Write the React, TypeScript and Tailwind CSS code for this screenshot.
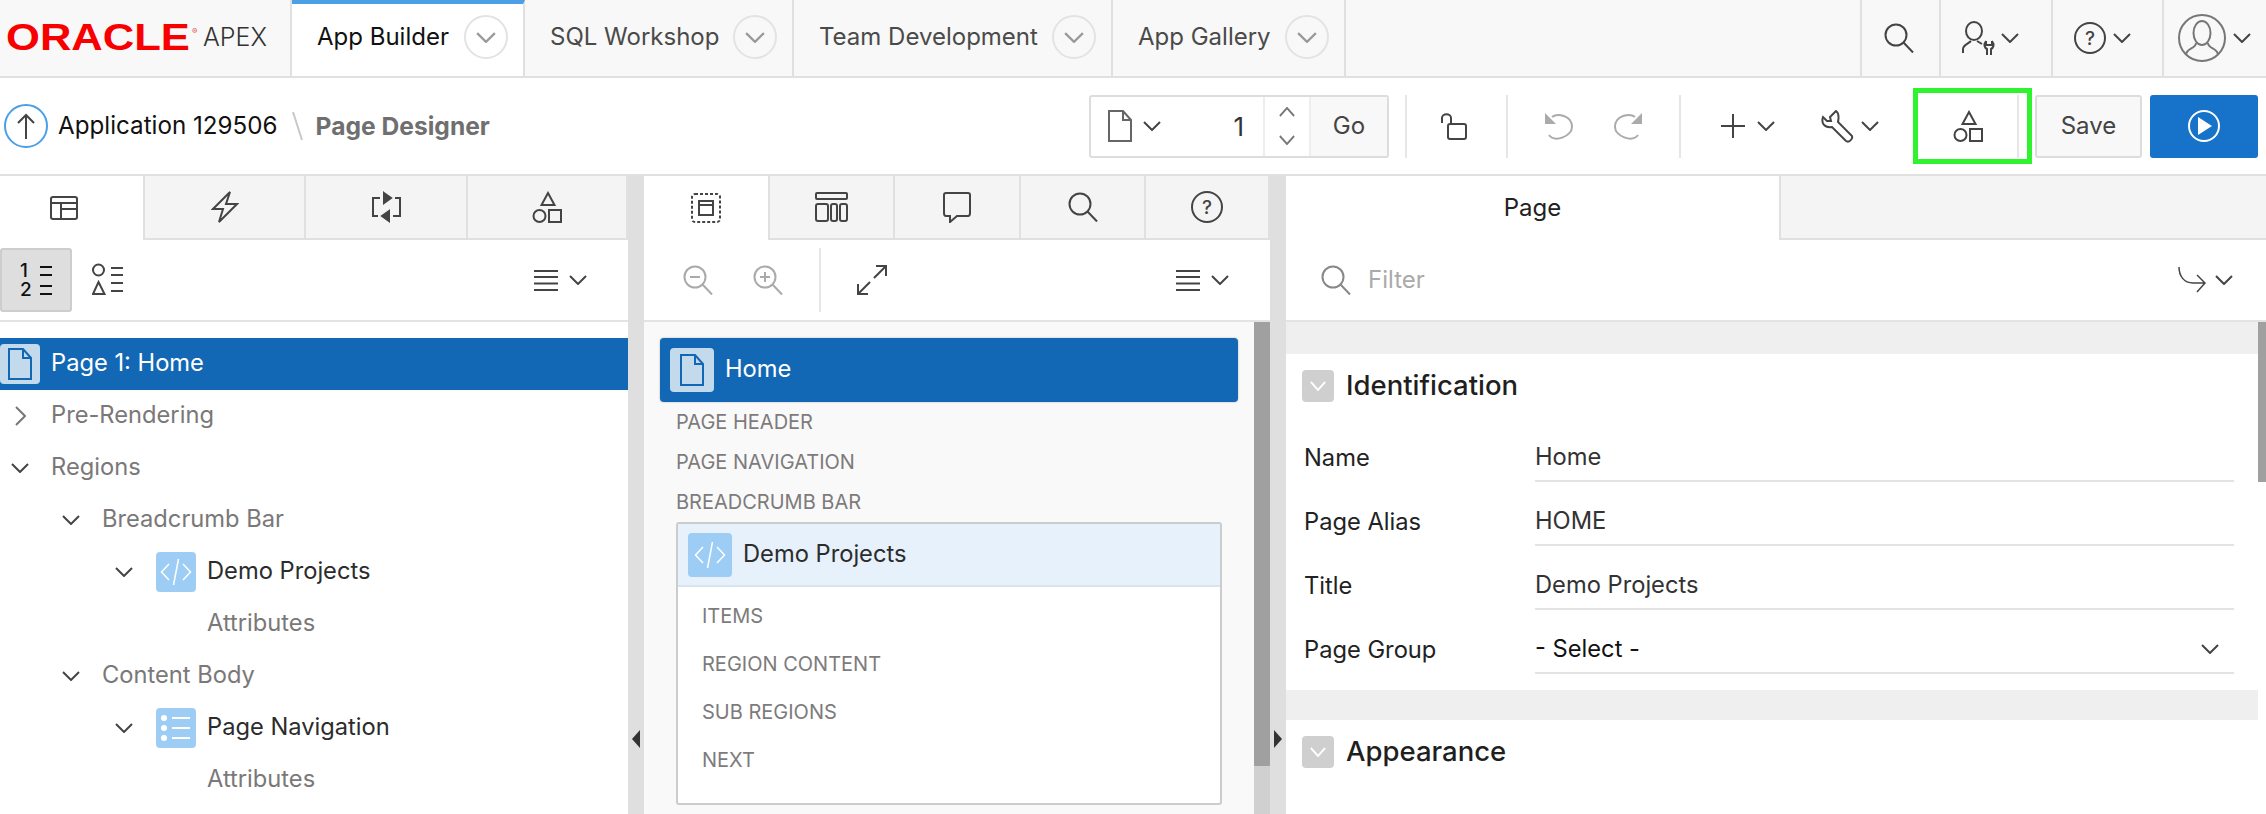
const Chev = ({ w = 18, h = 10, c = "#444", sw = 2 }: { w?: number; h?: number; c?: string; sw?: number }) => (
  <svg width={w} height={h} viewBox="0 0 18 10" preserveAspectRatio="none" fill="none" className="shrink-0">
    <polyline points="1,1 9,9 17,1" stroke={c} strokeWidth={sw} />
  </svg>
);

const Ico = ({ w, h, vb, c = "#444", sw = 2, children }: { w: number; h: number; vb?: string; c?: string; sw?: number; children: React.ReactNode }) => (
  <svg width={w} height={h} viewBox={vb ?? `0 0 ${w} ${h}`} fill="none" stroke={c} strokeWidth={sw} className="shrink-0">
    {children}
  </svg>
);

const PageIcon = ({ w = 24, h = 32, c = "#666", fill = "none" }: { w?: number; h?: number; c?: string; fill?: string }) => (
  <Ico w={w} h={h} vb="0 0 24 32" c={c}>
    <path d="M1 1H15L23 10V31H1Z" fill={fill} />
    <path d="M15 1V10H23" />
  </Ico>
);

const Shapes = ({ c = "#444" }: { c?: string }) => (
  <Ico w={30} h={32} c={c}>
    <path d="M16 2L22.500 14H9.500Z" />
    <circle cx="7.500" cy="25" r="6" />
    <rect x="17" y="19" width="12" height="12" />
  </Ico>
);

const Search = ({ s = 30, c = "#444" }: { s?: number; c?: string }) => (
  <Ico w={s} h={s} vb="0 0 30 30" c={c}>
    <circle cx="12" cy="12" r="10.5" />
    <path d="M19.5 19.5L29 29.5" />
  </Ico>
);

const Zoom = ({ plus }: { plus?: boolean }) => (
  <Ico w={30} h={30} c="#aaa">
    <circle cx="12" cy="12" r="10.5" />
    <path d="M19.5 19.5L29 29.5" />
    <path d="M7 12H17" />
    {plus && <path d="M12 7V17" />}
  </Ico>
);

const Help = ({ s = 32 }: { s?: number }) => (
  <span className="flex shrink-0 items-center justify-center rounded-full border-2 border-[#444] text-[#444]" style={{ width: s, height: s }}>
    <span className="text-[19px] font-medium leading-none">?</span>
  </span>
);

const Burger = () => (
  <div className="flex items-center gap-[11px]">
    <Ico w={24} h={22}>
      <path d="M0 2H24M0 8H24M0 14.500H24M0 21H24" />
    </Ico>
    <Chev />
  </div>
);

const CodeIcon = ({ s = 40 }: { s?: number }) => (
  <div className="flex shrink-0 items-center justify-center rounded-[4px] bg-[#9dcdf5]" style={{ width: s, height: s }}>
    <Ico w={32} h={30} c="#fff" sw={1.500}>
      <path d="M9 7L1.500 15L9 23M23 7L30.500 15L23 23M18.500 2L13.500 28" />
    </Ico>
  </div>
);

const ListIcon = () => (
  <div className="flex h-[40px] w-[40px] shrink-0 items-center justify-center rounded-[4px] bg-[#9dcdf5]">
    <svg width="30" height="30" viewBox="0 0 30 30" fill="#fff">
      <circle cx="3" cy="5" r="3" />
      <circle cx="3" cy="15" r="3" />
      <circle cx="3" cy="25" r="3" />
      <rect x="11" y="4" width="18" height="2" />
      <rect x="11" y="14" width="18" height="2" />
      <rect x="11" y="24" width="18" height="2" />
    </svg>
  </div>
);

const Menu = ({ label, w, textW, active }: { label: string; w: number; textW: number; active?: boolean }) => (
  <div className={`flex h-full shrink-0 items-center border-r-2 border-[#e0e0e0] pl-[25px] ${active ? "border-t-[4px] border-t-[#4a9fe5] bg-white pb-[6px]" : "bg-[#f8f8f8] pb-[2px]"}`} style={{ width: w }}>
    <span className={`whitespace-nowrap text-[24px] ${active ? "text-[#111]" : "text-[#4a4a4a]"}`} style={{ width: textW }}>
      {label}
    </span>
    <span className="flex h-[44px] w-[44px] items-center justify-center rounded-full border-2 border-[#e3e3e3] pt-[1px]">
      <Chev w={20} h={11} c="#999" />
    </span>
  </div>
);

const Tab = ({ w, active, cls = "", children }: { w?: number; active?: boolean; cls?: string; children?: React.ReactNode }) => (
  <div className={`flex h-full items-center justify-center border-r-2 border-[#e0e0e0] ${active ? "bg-white" : "border-b-2 bg-[#f4f4f4]"} ${w ? "shrink-0" : "flex-1"} ${cls}`} style={w ? { width: w } : undefined}>
    {children}
  </div>
);

const Row = ({ pad, chev, side, icon, dark, children }: { pad: number; chev?: "down" | "right"; side?: boolean; icon?: React.ReactNode; dark?: boolean; children: React.ReactNode }) => (
  <div className="flex h-[52px] items-center" style={{ paddingLeft: pad }}>
    <div className="flex w-[20px] shrink-0 justify-center">
      {chev === "down" && <Chev />}
      {chev === "right" && (
        <svg width="11" height="20" viewBox="0 0 11 20" fill="none">
          <polyline points="1,1 10,10 1,19" stroke="#777" strokeWidth="2" />
        </svg>
      )}
    </div>
    {icon && <div className="ml-[22px]">{icon}</div>}
    <span className={`pb-[2px] text-[23.7px] ${dark ? "text-[#2c2c2c]" : "text-[#7a7878]"} ${icon ? "ml-[11px]" : side ? "ml-[73px]" : "ml-[21px]"}`}>{children}</span>
  </div>
);

const Splitter = ({ dir }: { dir: "l" | "r" }) => (
  <div className="flex w-[16px] shrink-0 justify-center bg-[#dfdfdf] pt-[554px]">
    <svg width="8" height="18" viewBox="0 0 8 18" fill="#333">
      {dir === "l" ? <path d="M8 0V18L0 9Z" /> : <path d="M0 0V18L8 9Z" />}
    </svg>
  </div>
);

const Field = ({ label, value, dark, select }: { label: string; value: string; dark?: boolean; select?: boolean }) => (
  <div className="flex h-[64px] pl-[18px] pr-[24px]">
    <span className="flex h-[64px] w-[231px] shrink-0 items-center pt-[16px] text-[23.7px] text-[#222]">{label}</span>
    <div className="flex h-[64px] flex-1 items-center justify-between border-b-2 border-[#e3e3e3] pt-[16px]">
      <span className={`text-[23.7px] ${dark ? "text-[#111]" : "text-[#333]"}`}>{value}</span>
      {select && (
        <span className="mr-[15px]">
          <Chev />
        </span>
      )}
    </div>
  </div>
);

const Section = ({ label }: { label: string }) => (
  <div className="flex h-[64px] items-center gap-[12px] pl-[16px]">
    <span className="flex h-[32px] w-[32px] items-center justify-center rounded-[4px] bg-[#cfcfcf]">
      <Chev w={16} h={10} c="#fff" />
    </span>
    <span className="text-[27.5px] font-medium text-[#1f1f1f]">{label}</span>
  </div>
);

const Caps = ({ children, cls = "" }: { children: React.ReactNode; cls?: string }) => (
  <div className={`text-[20px] uppercase text-[#7d7b7b] ${cls}`}>{children}</div>
);

export default function App() {
  return (
    <div className="flex h-[814px] w-[2266px] flex-col overflow-hidden bg-white font-[Inter,sans-serif]">
      {/* top nav */}
      <div className="flex h-[78px] shrink-0 items-stretch border-b-2 border-[#e0e0e0] bg-[#f8f8f8]">
        <div className="flex w-[292px] shrink-0 items-center border-r-2 border-[#e0e0e0] pl-[6px]">
          <span className="w-[186px] origin-left scale-x-[1.21] font-['Liberation_Sans',sans-serif] text-[36px] font-bold leading-none text-[#f80000]">ORACLE</span>
          <span className="mb-[14px] w-[11px] text-[8px] leading-none text-[#e05050]">®</span>
          <span className="text-[25px] font-light text-[#333]">APEX</span>
        </div>
        <Menu label="App Builder" w={233} textW={147} active />
        <Menu label="SQL Workshop" w={269} textW={183} />
        <Menu label="Team Development" w={319} textW={233} />
        <Menu label="App Gallery" w={233} textW={147} />
        <div className="flex-1" />
        <div className="flex w-[79px] shrink-0 items-center justify-center border-l-2 border-[#e0e0e0] pr-[4px]">
          <Search />
        </div>
        <div className="flex w-[112px] shrink-0 items-center gap-[1px] border-l-2 border-[#e0e0e0] pl-[21px]">
          <Ico w={38} h={34}>
            <ellipse cx="12" cy="10" rx="8" ry="9" />
            <path d="M1 32V28C1 24 6 23 9 20" />
            <path d="M15 20L20 23" />
            <path d="M24 20C21 24 23 27 25 28V34M30 20C33 24 31 27 29 28V34M24 20V24H30V20" />
          </Ico>
          <Chev />
        </div>
        <div className="flex w-[111px] shrink-0 items-center gap-[7px] border-l-2 border-[#e0e0e0] pl-[21px]">
          <Help />
          <Chev />
        </div>
        <div className="flex w-[104px] shrink-0 items-center gap-[7px] border-l-2 border-[#e0e0e0] pl-[14px]">
          <Ico w={48} h={48} c="#777">
            <circle cx="24" cy="24" r="23" />
            <ellipse cx="24" cy="19" rx="8.500" ry="12" />
            <path d="M18 29C18 35 8 34 8 41M30 29C30 35 40 34 40 41" />
          </Ico>
          <Chev />
        </div>
      </div>

      {/* page toolbar */}
      <div className="flex h-[98px] shrink-0 items-center border-b-2 border-[#e0e0e0] pl-[4px] pr-[8px]">
        <span className="flex h-[44px] w-[44px] shrink-0 items-center justify-center rounded-full border-2 border-[#4a9fe5]">
          <Ico w={18} h={26}>
            <path d="M9 26V2M1 10L9 2L17 10" />
          </Ico>
        </span>
        <span className="ml-[10px] text-[24.2px] text-[#111]">Application 129506</span>
        <svg width="12" height="30" viewBox="0 0 12 30" className="ml-[14px] shrink-0" fill="none">
          <path d="M1 1L10 29" stroke="#c8c8c8" strokeWidth="2" />
        </svg>
        <span className="ml-[12px] text-[24.6px] font-bold text-[#706f6f]">Page Designer</span>

        <div className="ml-auto flex h-[63px] w-[300px] shrink-0 items-stretch rounded-[3px] border-2 border-[#ddd]">
          <div className="flex w-[172px] shrink-0 items-center pl-[17px] pr-[19px]">
            <PageIcon />
            <span className="ml-[11px]">
              <Chev />
            </span>
            <span className="ml-auto text-[26px] text-[#333]">1</span>
          </div>
          <div className="flex w-[48px] shrink-0 flex-col items-center justify-center gap-[18px] border-x-2 border-[#eee]">
            <span className="rotate-180">
              <Chev w={16} c="#777" />
            </span>
            <Chev w={16} c="#777" />
          </div>
          <div className="flex flex-1 items-center justify-center bg-[#f8f8f8] text-[24px] text-[#444]">Go</div>
        </div>
        <span className="ml-[16px] h-[63px] w-[2px] shrink-0 bg-[#e6e6e6]" />
        <div className="flex h-[63px] w-[99px] shrink-0 items-center justify-center pr-[6px]">
          <Ico w={26} h={28}>
            <path d="M1 11V6C1 1 10 1 10 6V12" />
            <rect x="7" y="12" width="18" height="15" rx="2" />
          </Ico>
        </div>
        <span className="h-[63px] w-[2px] shrink-0 bg-[#e6e6e6]" />
        <div className="flex h-[63px] w-[171px] shrink-0 items-center pl-[37px]">
          <Ico w={28} h={28} c="#aaa" sw={2}>
            <path d="M7 5C12 1 27 3 27 15C27 24 10 31 4 23" />
            <path d="M0 1V12H11Z" fill="#aaa" stroke="none" />
          </Ico>
          <span className="ml-[41px]">
            <Ico w={28} h={28} c="#aaa" sw={2}>
              <path d="M21 5C16 1 1 3 1 15C1 24 18 31 24 23" />
              <path d="M28 1V12H17Z" fill="#aaa" stroke="none" />
            </Ico>
          </span>
        </div>
        <span className="h-[63px] w-[2px] shrink-0 bg-[#e6e6e6]" />
        <div className="flex h-[63px] w-[232px] shrink-0 items-center pl-[40px]">
          <Ico w={24} h={24}>
            <path d="M12 0V24M0 12H24" />
          </Ico>
          <span className="ml-[12px]">
            <Chev />
          </span>
          <span className="ml-[46px]">
            <Ico w={33} h={33}>
              <path d="M15 1L9 7L10 11L6 11L2 7C0 13 3 18 11 17L25 31C28 33 32 29 31 26L17 12C18 7 18 3 15 1Z" />
            </Ico>
          </span>
          <span className="ml-[7px]">
            <Chev />
          </span>
        </div>
        <div className="flex h-[76px] w-[119px] shrink-0 items-center border-[5px] border-[#2ff32f]">
          <div className="flex flex-1 justify-center">
            <Shapes />
          </div>
          <span className="mr-[8px] h-[63px] w-[2px] bg-[#e6e6e6]" />
        </div>
        <div className="ml-[3px] flex h-[63px] w-[107px] shrink-0 items-center justify-center rounded-[3px] border-2 border-[#ddd] bg-[#f8f8f8] text-[24px] text-[#444]">Save</div>
        <div className="ml-[8px] flex h-[63px] w-[108px] shrink-0 items-center justify-center rounded-[3px] bg-[#1673c9]">
          <span className="flex h-[32px] w-[32px] items-center justify-center rounded-full border-2 border-white pl-[2px]">
            <svg width="14" height="18" viewBox="0 0 14 18" fill="#fff">
              <path d="M0 0L14 9L0 18Z" />
            </svg>
          </span>
        </div>
      </div>

      <div className="flex min-h-0 flex-1">
        {/* rendering tree */}
        <div className="flex w-[628px] shrink-0 flex-col overflow-hidden">
          <div className="flex h-[64px] shrink-0">
            <Tab w={145} active cls="pr-[16px]">
              <Ico w={28} h={24}>
                <rect x="1" y="1" width="26" height="22" rx="2" />
                <path d="M1 7H27M11 7V23M11 13H27" />
              </Ico>
            </Tab>
            <Tab w={161}>
              <Ico w={28} h={32}>
                <path d="M19 1L2 18H12L8 31L26 13H15Z" />
              </Ico>
            </Tab>
            <Tab w={162}>
              <Ico w={33} h={32}>
                <path d="M10 7H3V25H8M23 25H30V7H25" />
                <path d="M14 2L21 7L14 12Z" fill="#444" />
                <path d="M19 20L12 25L19 30Z" fill="#444" />
              </Ico>
            </Tab>
            <Tab w={160}>
              <Shapes />
            </Tab>
          </div>
          <div className="flex h-[82px] shrink-0 items-center border-b-2 border-[#e3e3e3]">
            <div className="flex h-[64px] w-[72px] items-center justify-center rounded-[3px] border-2 border-[#cdcdcd] bg-[#dedede]">
              <div className="grid grid-cols-[11px_12px] items-center gap-x-[9px] text-[19px] font-medium leading-[19px] text-[#111]">
                <span>1</span>
                <span className="h-[10px] border-y-2 border-[#111]" />
                <span>2</span>
                <span className="h-[10px] border-y-2 border-[#111]" />
              </div>
            </div>
            <div className="ml-[20px]">
              <Ico w={32} h={34}>
                <circle cx="6.500" cy="7" r="5.500" />
                <path d="M6.500 19L12.500 31H1Z" />
                <path d="M19 5H31M19 12H31M19 20H31M19 28H31" />
              </Ico>
            </div>
            <div className="ml-auto mr-[41px]">
              <Burger />
            </div>
          </div>
          <div className="pt-[16px]">
            <div className="flex h-[52px] items-center bg-[#1368b5]">
              <div className="flex h-[40px] w-[40px] items-center justify-center rounded-[4px] bg-[#c3d9ec]">
                <PageIcon c="#1368b5" w={24} h={32} />
              </div>
              <span className="ml-[11px] pb-[2px] text-[23.7px] text-white">Page 1: Home</span>
            </div>
            <Row pad={10} chev="right">Pre-Rendering</Row>
            <Row pad={10} chev="down">Regions</Row>
            <Row pad={61} chev="down">Breadcrumb Bar</Row>
            <Row pad={114} chev="down" icon={<CodeIcon />} dark>Demo Projects</Row>
            <Row pad={114} side>Attributes</Row>
            <Row pad={61} chev="down">Content Body</Row>
            <Row pad={114} chev="down" icon={<ListIcon />} dark>Page Navigation</Row>
            <Row pad={114} side>Attributes</Row>
          </div>
        </div>

        <Splitter dir="l" />

        {/* grid layout */}
        <div className="flex w-[626px] shrink-0 flex-col overflow-hidden">
          <div className="flex h-[64px] shrink-0">
            <Tab w={126} active>
              <Ico w={30} h={30}>
                <rect x="1" y="1" width="28" height="28" rx="3" strokeDasharray="3 2" />
                <rect x="8" y="8" width="14" height="14" />
                <path d="M8 12H22" />
              </Ico>
            </Tab>
            <Tab w={125}>
              <Ico w={33} h={30}>
                <rect x="1" y="1" width="31" height="6" rx="1" />
                <rect x="1" y="12" width="12" height="17" rx="2" />
                <rect x="16" y="12" width="6" height="17" rx="2" />
                <rect x="25" y="12" width="7" height="17" rx="2" />
              </Ico>
            </Tab>
            <Tab w={126}>
              <Ico w={28} h={31}>
                <path d="M3 1H25C26 1 27 2 27 3V21C27 23 26 24 25 24H14L7 30V24H3C2 24 1 23 1 21V3C1 2 2 1 3 1Z" />
              </Ico>
            </Tab>
            <Tab w={125}>
              <Search />
            </Tab>
            <Tab w={124}>
              <Help />
            </Tab>
          </div>
          <div className="flex h-[82px] shrink-0 items-center border-b-2 border-[#e3e3e3]">
            <div className="ml-[39px] flex gap-[40px]">
              <Zoom />
              <Zoom plus />
            </div>
            <span className="ml-[36px] h-[64px] w-[2px] bg-[#e6e6e6]" />
            <div className="ml-[36px]">
              <Ico w={30} h={30}>
                <path d="M29 1L17 13M19 1H29V11" />
                <path d="M1 29L13 17M1 19V29H11" />
              </Ico>
            </div>
            <div className="ml-auto mr-[41px]">
              <Burger />
            </div>
          </div>
          <div className="flex min-h-0 flex-1">
            <div className="min-w-0 flex-1 bg-[#f9f9f9] pl-[16px] pr-[16px] pt-[16px]">
              <div className="flex h-[64px] items-center rounded-[4px] bg-[#1368b5] pl-[10px] shadow-[0_0_2px_#aaa]">
                <div className="flex h-[44px] w-[44px] items-center justify-center rounded-[4px] bg-[#c3d9ec]">
                  <PageIcon c="#1368b5" w={24} h={32} />
                </div>
                <span className="ml-[11px] pb-[2px] text-[23.7px] text-white">Home</span>
              </div>
              <div className="pl-[16px]">
                <Caps cls="flex h-[40px] items-center">Page Header</Caps>
                <Caps cls="flex h-[40px] items-center">Page Navigation</Caps>
                <Caps cls="flex h-[40px] items-center">Breadcrumb Bar</Caps>
                <div className="h-[283px] w-[546px] rounded-[3px] border-2 border-[#ccc] bg-white">
                  <div className="flex h-[63px] items-center border-b-2 border-[#d8e4ee] bg-[#e6f1fb] pl-[10px]">
                    <CodeIcon s={44} />
                    <span className="ml-[11px] pb-[2px] text-[23.7px] text-[#2c2c2c]">Demo Projects</span>
                  </div>
                  <div className="pl-[24px] pt-[5px]">
                    <Caps cls="flex h-[48px] items-center">Items</Caps>
                    <Caps cls="flex h-[48px] items-center">Region Content</Caps>
                    <Caps cls="flex h-[48px] items-center">Sub Regions</Caps>
                    <Caps cls="flex h-[48px] items-center">Next</Caps>
                  </div>
                </div>
              </div>
            </div>
            <div className="w-[16px] shrink-0 bg-[#d0d0d0]">
              <div className="h-[444px] bg-[#a0a0a0]" />
            </div>
          </div>
        </div>

        <Splitter dir="r" />

        {/* property editor */}
        <div className="flex min-w-0 flex-1 flex-col overflow-hidden">
          <div className="flex h-[64px] shrink-0">
            <Tab w={495} active>
              <span className="text-[24px] text-[#222]">Page</span>
            </Tab>
            <div className="flex-1 border-b-2 border-[#e0e0e0] bg-[#f4f4f4]" />
          </div>
          <div className="flex h-[82px] shrink-0 items-center border-b-2 border-[#e3e3e3] pl-[35px]">
            <Search c="#888" />
            <span className="ml-[17px] text-[24px] text-[#aaa]">Filter</span>
            <div className="ml-auto mr-[33px] flex items-center gap-[9px]">
              <Ico w={28} h={26} sw={1.500}>
                <path d="M1 0C1 9 6 16 15 16H27M19 8L27 16L19 25" />
              </Ico>
              <Chev />
            </div>
          </div>
          <div className="flex min-h-0 flex-1">
            <div className="min-w-0 flex-1">
              <div className="h-[32px] bg-[#efefef]" />
              <Section label="Identification" />
              <Field label="Name" value="Home" />
              <Field label="Page Alias" value="HOME" />
              <Field label="Title" value="Demo Projects" />
              <Field label="Page Group" value="- Select -" dark select />
              <div className="mt-[16px] h-[30px] bg-[#efefef]" />
              <Section label="Appearance" />
            </div>
            <div className="w-[8px] shrink-0">
              <div className="h-[160px] bg-[#a0a0a0]" />
            </div>
          </div>
        </div>
      </div>
    </div>
  );
}
